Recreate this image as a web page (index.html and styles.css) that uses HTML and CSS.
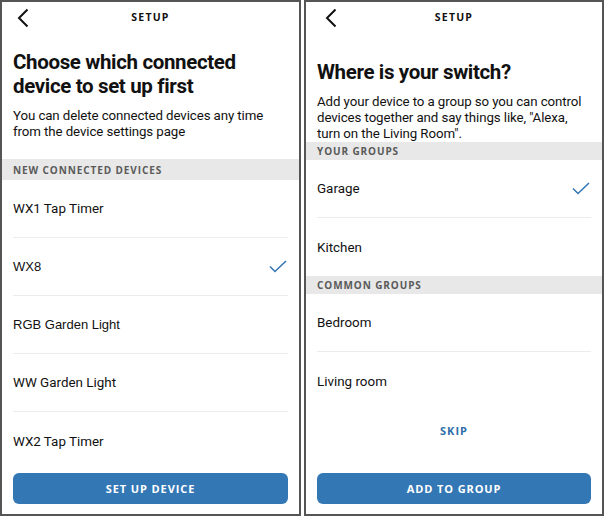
FILE: index.html
```html
<!DOCTYPE html>
<html>
<head>
<meta charset="utf-8">
<link rel="stylesheet" href="styles.css">
</head>
<body>
<div class="screens">
  <section class="phone phone-left">
    <header class="topbar">
      <svg class="back" width="12" height="20" viewBox="0 0 12 20"><path d="M10.5 1.5 L2 10 L10.5 18.5" fill="none" stroke="#111" stroke-width="2"/></svg>
      <h2 class="title">SETUP</h2>
    </header>
    <div class="intro intro-left">
      <h1 class="heading">Choose which connected device to set up first</h1>
      <p class="lead">You can delete connected devices any time from the device settings page</p>
    </div>
    <div class="label label-left">NEW CONNECTED DEVICES</div>
    <ul class="list">
      <li class="row">WX1 Tap Timer</li>
      <li class="row alt">WX8 <svg class="check" width="18" height="13" viewBox="0 0 18 13"><path d="M1 6.5 L6 11.5 L17 1" fill="none" stroke="#3478b5" stroke-width="1.6"/></svg></li>
      <li class="row alt">RGB Garden Light</li>
      <li class="row">WW Garden Light</li>
      <li class="row">WX2 Tap Timer</li>
    </ul>
    <button class="primary">SET UP DEVICE</button>
  </section>
  <section class="phone phone-right">
    <header class="topbar">
      <svg class="back" width="12" height="20" viewBox="0 0 12 20"><path d="M10.5 1.5 L2 10 L10.5 18.5" fill="none" stroke="#111" stroke-width="2"/></svg>
      <h2 class="title">SETUP</h2>
    </header>
    <div class="intro intro-right">
      <h1 class="heading">Where is your switch?</h1>
      <p class="lead">Add your device to a group so you can control devices together and say things like, "Alexa, turn on the Living Room".</p>
    </div>
    <div class="label">YOUR GROUPS</div>
    <ul class="list">
      <li class="row">Garage <svg class="check" width="18" height="13" viewBox="0 0 18 13"><path d="M1 6.5 L6 11.5 L17 1" fill="none" stroke="#3478b5" stroke-width="1.6"/></svg></li>
      <li class="row">Kitchen</li>
    </ul>
    <div class="label">COMMON GROUPS</div>
    <ul class="list">
      <li class="row">Bedroom</li>
      <li class="row">Living room</li>
    </ul>
    <a class="skip">SKIP</a>
    <button class="primary">ADD TO GROUP</button>
  </section>
</div>
</body>
</html>
```
FILE: styles.css
```css
* { box-sizing: border-box; }
html, body { margin: 0; padding: 0; background: #fff; }
body { font-family: Roboto, "Noto Sans", sans-serif; color: #111; }

.screens { display: flex; gap: 3px; }

.phone {
  height: 516px;
  border: 2px solid #555;
  display: flex;
  flex-direction: column;
  padding-bottom: 10px;
  background: #fff;
}
.phone-left { width: 301px; }
.phone-right { width: 300px; }

.topbar {
  position: relative;
  height: 30px;
  display: flex;
  align-items: center;
  justify-content: center;
}
.back { position: absolute; left: 15px; top: 6px; }
.phone-right .back { left: 19px; top: 6px; }
.title {
  margin: 0;
  font-family: "Open Sans", sans-serif;
  font-size: 10.5px;
  font-weight: 700;
  letter-spacing: 1.2px;
}

.intro { padding: 0 10px 0 11px; }
.intro-left { padding-top: 18px; }
.intro-right { padding-top: 28px; }
.heading {
  margin: 0;
  font-size: 20.5px;
  line-height: 24px;
  font-weight: 700;
  letter-spacing: -0.35px;
}
.lead {
  margin: 0;
  font-size: 13.3px;
  line-height: 16px;
  letter-spacing: -0.1px;
}
.intro-left .lead { margin-top: 10px; margin-bottom: 19px; }
.intro-right .lead { margin-top: 10px; margin-bottom: 0; }

.label {
  background: #e8e8e8;
  height: 18px;
  display: flex;
  align-items: center;
  padding-left: 11px;
  font-family: "Open Sans", sans-serif;
  font-size: 10px;
  font-weight: 700;
  letter-spacing: 0.9px;
  color: #5a5a5a;
}
.label-left { height: 21px; }

.list { list-style: none; margin: 0 11px; padding: 0; }
.row {
  height: 58px;
  display: flex;
  align-items: center;
  justify-content: space-between;
  font-size: 13.4px;
  border-bottom: 1px solid #ececec;
  padding-right: 1px;
}
.row:last-child { border-bottom: none; }
.row.alt { font-family: "Liberation Sans", Arial, sans-serif; font-size: 13px; }

.skip {
  display: block;
  text-align: center;
  margin-top: 13px;
  font-family: "Open Sans", sans-serif;
  font-size: 11px;
  font-weight: 700;
  letter-spacing: 1px;
  color: #2f6fa8;
}

.primary {
  margin: auto 11px 0 11px;
  height: 31px;
  border: none;
  border-radius: 6px;
  background: #3477b5;
  color: #fff;
  font-family: "Open Sans", sans-serif;
  font-size: 11px;
  font-weight: 700;
  letter-spacing: 0.9px;
}
```
